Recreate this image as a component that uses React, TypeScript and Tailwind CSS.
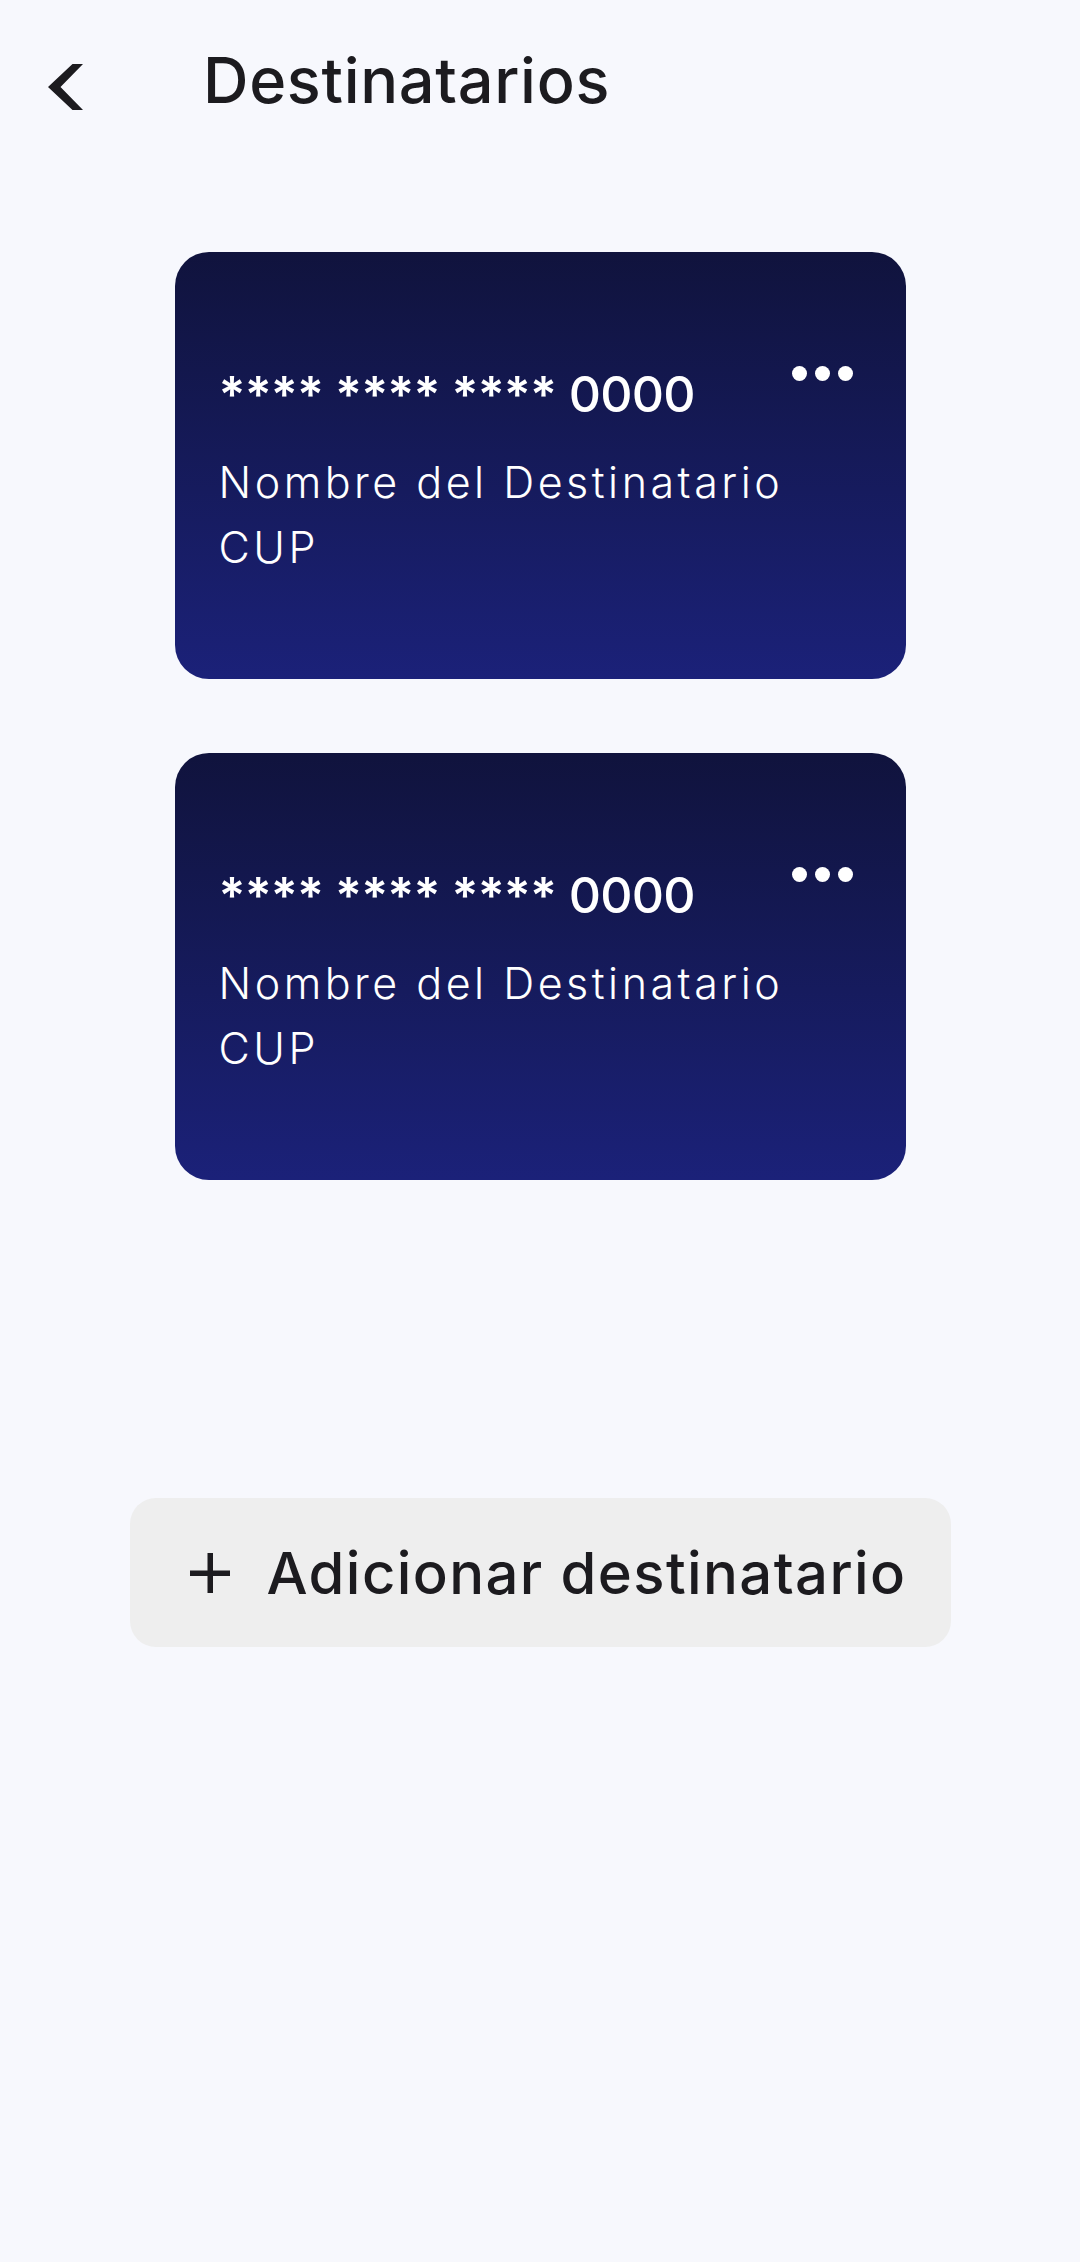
import React from "react";

const cards = [
    { mask: "**** **** ****", last: "0000", name: "Nombre del Destinatario", type: "CUP" },
    { mask: "**** **** ****", last: "0000", name: "Nombre del Destinatario", type: "CUP" },
];

function BackIcon() {
    return (
        <svg width="35" height="46" viewBox="0 0 35 46" className="shrink-0 translate-y-[7px]">
            <polygon points="24.5,0 35,0 12.5,23 35,46 24.5,46 0,23" fill="#1c1b1f" />
        </svg>
    );
}

function RecipientCard({ mask, last, name, type }: { mask: string; last: string; name: string; type: string }) {
    return (
        <div className="w-[731px] h-[427px] rounded-[34px] bg-gradient-to-b from-[#10133d] to-[#1b2179] pl-[44px] pr-[53px] pt-[110px] text-white">
            <div className="flex items-start justify-between">
                <div className="text-[50px] font-medium leading-[64px] tracking-[-0.8px]">
                    <span className="font-semibold">{mask}</span> {last}
                </div>
                <div className="flex gap-[8px] pt-[4px]">
                    <span className="w-[15px] h-[15px] rounded-full bg-white" />
                    <span className="w-[15px] h-[15px] rounded-full bg-white" />
                    <span className="w-[15px] h-[15px] rounded-full bg-white" />
                </div>
            </div>
            <div className="mt-[24px] text-[43px] font-light leading-[65px] tracking-[3.5px]">
                <div>{name}</div>
                <div>{type}</div>
            </div>
        </div>
    );
}

export default function App() {
    return (
        <div
            className="min-h-[2262px] bg-[#f7f8fd] text-[#1c1b1f]"
            style={{ fontFamily: "Inter, 'Open Sans', sans-serif" }}
        >
            {/* header */}
            <header className="flex items-center pl-[48px] pt-[52px]">
                <BackIcon />
                <h1 className="ml-[120px] text-[63px] font-medium leading-[56px] tracking-[0.7px]">Destinatarios</h1>
            </header>

            {/* cards */}
            <div className="flex flex-col items-center gap-[74px] mt-[144px]">
                {cards.map((c, i) => (
                    <RecipientCard key={i} {...c} />
                ))}
            </div>

            {/* add button */}
            <div className="flex justify-center mt-[318px]">
                <button className="w-[821px] h-[149px] rounded-[26px] bg-[#eeeeee] flex items-center justify-center gap-[37px] pl-[16px]">
                    <svg width="40" height="40" viewBox="0 0 40 40">
                        <rect x="17.5" y="0" width="5.5" height="40" fill="#1c1b1f" />
                        <rect x="0" y="17.5" width="40" height="5.5" fill="#1c1b1f" />
                    </svg>
                    <span className="text-[58px] font-medium leading-none tracking-[1.4px] text-[#1c1b1f]">Adicionar destinatario</span>
                </button>
            </div>
        </div>
    );
}
